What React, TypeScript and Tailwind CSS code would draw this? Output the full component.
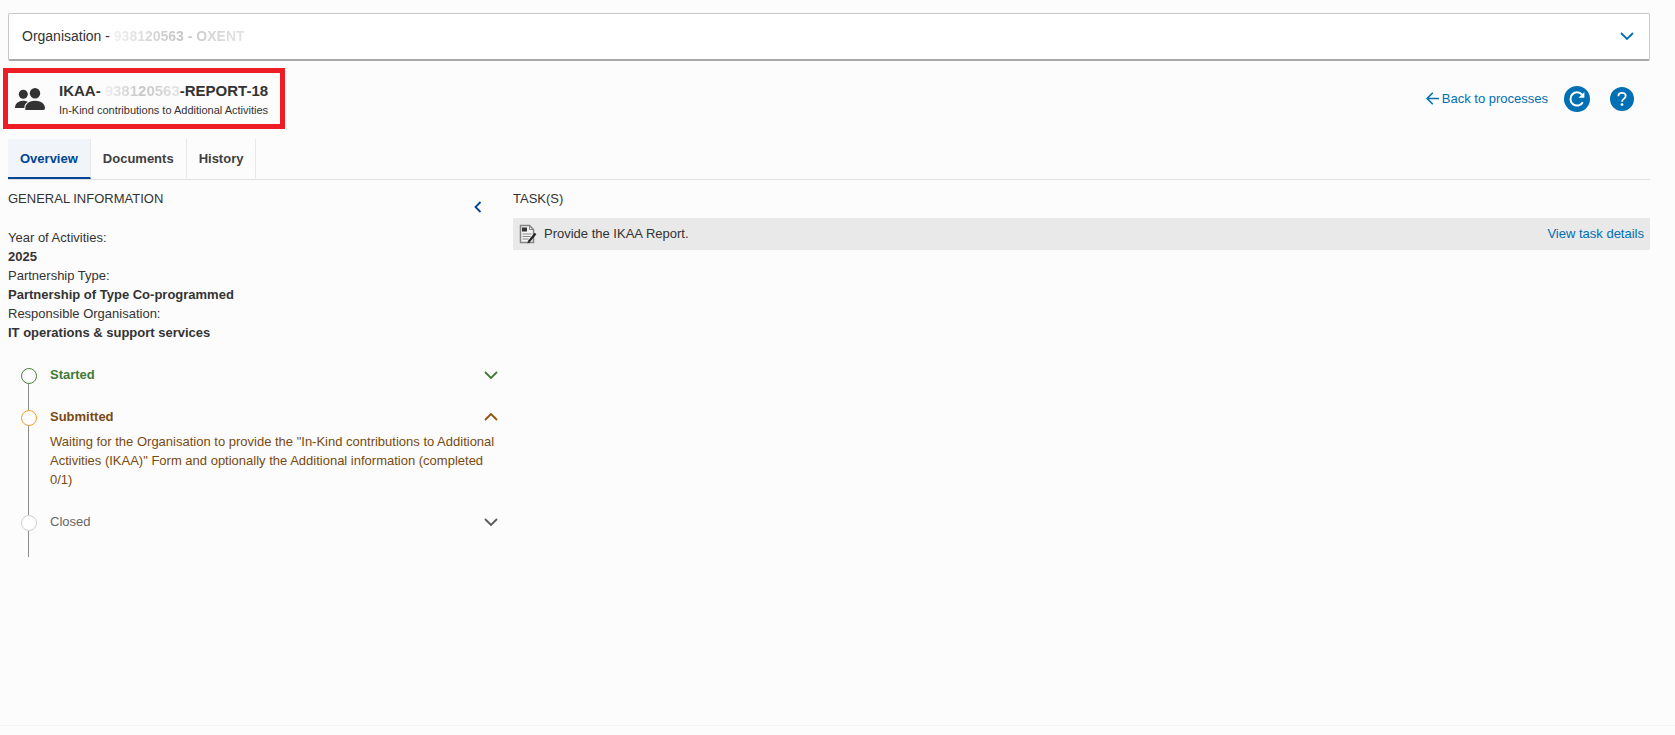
import { useState } from "react";
import clsx from "clsx";

const TABS = ["Overview", "Documents", "History"];

const INFO = [
  { label: "Year of Activities:", value: "2025" },
  { label: "Partnership Type:", value: "Partnership of Type Co-programmed" },
  { label: "Responsible Organisation:", value: "IT operations & support services" },
];

const STEPS = [
  { name: "Started", open: false, ring: "border-[#4c8040]", title: "font-bold text-[#3f7a35]", chevron: "text-[#3f7a35]" },
  {
    name: "Submitted",
    open: true,
    ring: "border-[#f39a2d]",
    title: "font-bold text-[#784a10]",
    chevron: "text-[#8f5310]",
    text: 'Waiting for the Organisation to provide the "In-Kind contributions to Additional Activities (IKAA)" Form and optionally the Additional information (completed 0/1)',
  },
  { name: "Closed", open: false, ring: "border-[#cfcfcf]", title: "text-[#666666]", chevron: "text-[#595959]" },
];

export default function App() {
  return (
    <div className="flex min-h-screen flex-col bg-[#fcfcfc] font-['Liberation_Sans',Arial,sans-serif] text-[13px] leading-[19px] text-[#333333]">
      <div className="flex-1 pt-[13px] pr-[25px] pl-2">
        <OrganisationBar />
        <ProcessHeader />
        <Tabs />
        <main className="flex">
          <GeneralInformation />
          <Tasks />
        </main>
      </div>
      <footer className="h-[10px] border-t border-[#f4f4f4]" />
    </div>
  );
}

function OrganisationBar() {
  return (
    <button type="button" className="flex h-12 w-full items-center justify-between rounded-[2px] border border-b-2 border-[#c8c8c8] border-b-[#a8a8a8] bg-white pr-[15px] pb-[2px] pl-[13px] text-sm">
      <span>
        Organisation - <Faded>938120563 - OXENT</Faded>
      </span>
      <Chevron className="text-[#006fb4]" />
    </button>
  );
}

function ProcessHeader() {
  return (
    <header className="mt-[7px] flex items-center justify-between">
      <div className="-ml-[5px] flex h-[61px] w-[282px] items-center border-[5px] border-[#ee1c25] pl-[7px] whitespace-nowrap">
        <PeopleIcon />
        <div className="ml-[14px] pt-[2px]">
          <h1 className="text-[15px] leading-5 font-bold">
            IKAA-
            <span className="ml-1">
              <Faded>938120563</Faded>
            </span>
            -REPORT-18
          </h1>
          <p className="text-[11px] leading-[18px]">In-Kind contributions to Additional Activities</p>
        </div>
      </div>
      <div className="flex items-center pr-4 text-[#006fb4]">
        <a href="#processes" className="flex items-center gap-[3px]">
          <svg width="13" height="13" viewBox="0 0 13 13" fill="none" stroke="currentColor" strokeWidth="1.6">
            <path d="M13 6.5H1M6.8 .8 1.1 6.5l5.7 5.7" />
          </svg>
          Back to processes
        </a>
        <button type="button" aria-label="Refresh" className="ml-4">
          <svg width="26" height="26" viewBox="0 0 26 26">
            <circle cx="13" cy="13" r="13" fill="currentColor" />
            <path d="M18 8.600A6.600 6.600 0 1 0 18.800 16.200" fill="none" stroke="#fff" strokeWidth="2" />
            <path d="M20.400 6v5.800h-6z" fill="#fff" />
          </svg>
        </button>
        <button type="button" aria-label="Help" className="ml-5">
          <svg width="24" height="24" viewBox="0 0 24 24">
            <circle cx="12" cy="12" r="12" fill="currentColor" />
            <path d="M8.400 9.200C8.400 7 9.900 5.900 12 5.900s3.700 1.200 3.700 3.200c0 2.700-3.700 2.800-3.700 5.600" fill="none" stroke="#fff" strokeWidth="1.800" />
            <circle cx="12" cy="17.600" r="1.400" fill="#fff" />
          </svg>
        </button>
      </div>
    </header>
  );
}

function Tabs() {
  const [active, setActive] = useState("Overview");

  return (
    <nav className="mt-[10px] flex h-[41px] border-b border-[#e0e0e0]">
      {TABS.map((tab) => (
        <button
          key={tab}
          type="button"
          onClick={() => setActive(tab)}
          className={clsx(
            "border-r border-b-2 border-r-[#e8e8e8] px-3 font-bold",
            active === tab ? "border-b-[#004494] bg-[#f1f5fa] text-[#004494]" : "border-b-transparent text-[#404040]",
          )}
        >
          {tab}
        </button>
      ))}
    </nav>
  );
}

function GeneralInformation() {
  return (
    <section className="w-[490px] shrink-0 pt-[9px]">
      <div className="flex justify-between pr-4">
        <h2>GENERAL INFORMATION</h2>
        <button type="button" aria-label="Collapse panel" className="mt-2 h-5 text-[#004494]">
          <svg width="8" height="12" viewBox="0 0 8 12" fill="none" stroke="currentColor" strokeWidth="1.8">
            <path d="M6.5 1 1.5 6l5 5" />
          </svg>
        </button>
      </div>
      <dl className="mt-[11px]">
        {INFO.map((row) => (
          <div key={row.label}>
            <dt>{row.label}</dt>
            <dd className="font-bold">{row.value}</dd>
          </div>
        ))}
      </dl>
      <ol className="mt-[26px] pl-[13px]">
        {STEPS.map((step) => (
          <Step key={step.name} {...step} />
        ))}
      </ol>
    </section>
  );
}

type StepProps = (typeof STEPS)[number];

function Step({ name, open, ring, title, chevron, text }: StepProps) {
  return (
    <li className="flex">
      {/* marker and the line down to the next one */}
      <div className="flex w-4 flex-col">
        <span className={clsx("size-4 shrink-0 rounded-full border bg-white", ring)} />
        <span className="ml-[7px] w-px flex-1 bg-[#8c8c8c]" />
      </div>
      <div className="ml-[13px] min-h-[42px] flex-1">
        <button type="button" className="-mt-[3px] flex w-full items-center justify-between" aria-expanded={open}>
          <span className={title}>{name}</span>
          <Chevron up={open} className={chevron} />
        </button>
        {text && <p className="mt-[6px] pb-[26px] text-[#784a10]">{text}</p>}
      </div>
    </li>
  );
}

function Tasks() {
  return (
    <section className="min-w-0 flex-1 pt-[9px] pl-[15px]">
      <h2>TASK(S)</h2>
      <div className="mt-[10px] flex h-8 items-center bg-[#e9e9e9] px-[6px] pb-px">
        <ReportIcon />
        <span className="ml-[7px] flex-1">Provide the IKAA Report.</span>
        <a href="#task" className="text-[#006fb4]">
          View task details
        </a>
      </div>
    </section>
  );
}

function Faded({ children }: { children: string }) {
  return <span className="bg-linear-to-r from-[#f0f0f0] via-[#c4c4c4] to-[#e4e4e4] bg-clip-text font-bold text-transparent">{children}</span>;
}

function Chevron({ up, className }: { up?: boolean; className?: string }) {
  return (
    <svg width="14" height="8" viewBox="0 0 14 8" fill="none" stroke="currentColor" strokeWidth="1.8" className={className}>
      <path d={up ? "M1 7l6-6 6 6" : "M1 1l6 6 6-6"} />
    </svg>
  );
}

function PeopleIcon() {
  return (
    <svg width="30" height="22" viewBox="0 0 30 22" fill="#333333" className="shrink-0">
      <circle cx="8.3" cy="6.3" r="4.5" />
      <circle cx="20" cy="5.2" r="5.2" />
      <path d="M0 20c0-4.300 3.500-7.300 8-7.300 2 0 3.600.4 4.900 1.100-2.300 1.400-3.600 3.500-3.600 6.200z" />
      <path d="M10.300 22v-2c0-4.200 4-7.300 9.800-7.300S30 15.800 30 20c0 1.200-.6 2-1.800 2z" />
    </svg>
  );
}

function ReportIcon() {
  return (
    <svg width="18" height="20" viewBox="0 0 18 20" fill="none">
      <path d="M1.500 1.500h9l4 4v13h-13z" fill="#f4f4f4" stroke="#858585" strokeWidth="1.500" />
      <path d="M10.500 1.500v4h4" stroke="#858585" />
      <path d="M3 3.500h5v4H3z" fill="#333" />
      <path d="M3.500 10h9M3.500 12.500h8M3.500 15h6" stroke="#858585" strokeWidth="1.200" />
      <path d="m16.500 9.500-7 8.500" stroke="#222" strokeWidth="2.200" />
      <path d="m8.500 19.500.3-2 1.600 1.200z" fill="#222" />
    </svg>
  );
}
